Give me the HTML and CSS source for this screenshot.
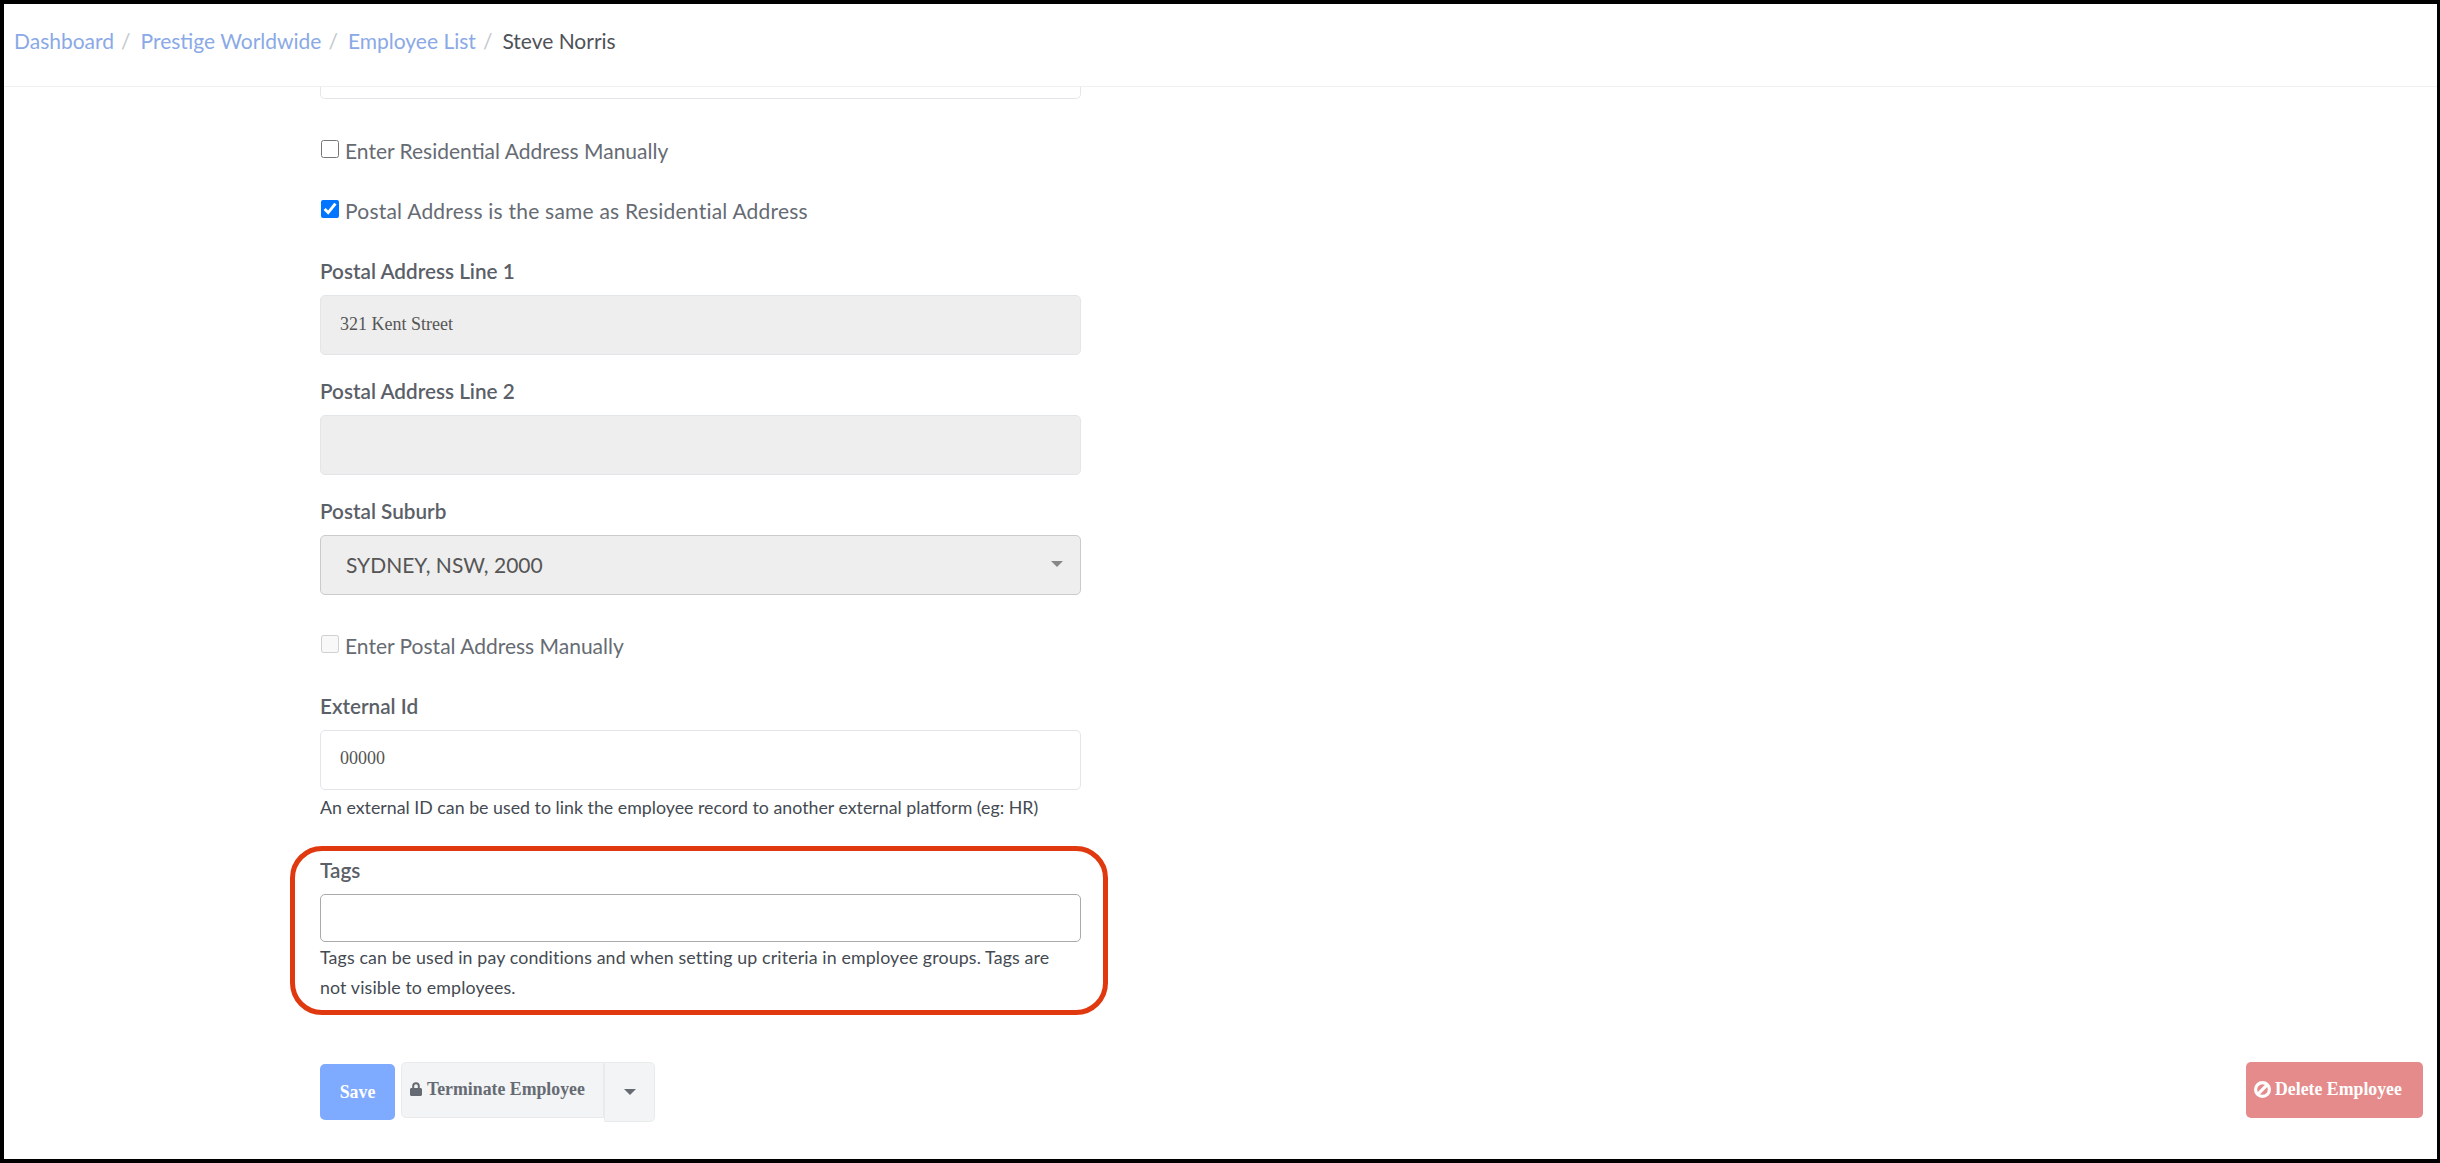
FILE: index.html
```html
<!DOCTYPE html>
<html lang="en">
<head>
<meta charset="utf-8">
<title>Steve Norris</title>
<link rel="stylesheet" href="styles.css">
</head>
<body>
<div class="frame">
  <nav class="crumbs">
    <a class="crumb-link">Dashboard</a><span class="crumb-sep">/</span>
    <a class="crumb-link">Prestige Worldwide</a><span class="crumb-sep">/</span>
    <a class="crumb-link">Employee List</a><span class="crumb-sep">/</span>
    <span class="crumb-current">Steve Norris</span>
  </nav>
  <main class="content">
    <form class="form">
      <div class="stub"></div>
      <label class="check check-first"><input type="checkbox" class="box"><span>Enter Residential Address Manually</span></label>
      <label class="check check-next"><input type="checkbox" class="box" checked><span>Postal Address is the same as Residential Address</span></label>

      <div class="field field-wide">
        <div class="label">Postal Address Line 1</div>
        <input class="control control-disabled" type="text" value="321 Kent Street" disabled>
      </div>
      <div class="field">
        <div class="label">Postal Address Line 2</div>
        <input class="control control-disabled" type="text" disabled>
      </div>
      <div class="field">
        <div class="label">Postal Suburb</div>
        <div class="select">
          <span>SYDNEY, NSW, 2000</span>
          <svg class="select-caret" width="12" height="6" viewBox="0 0 12 6"><path d="M0 0h12L6 6z"/></svg>
        </div>
      </div>
      <label class="check check-muted"><input type="checkbox" class="box" disabled><span>Enter Postal Address Manually</span></label>
      <div class="field field-wide">
        <div class="label">External Id</div>
        <input class="control" type="text" value="00000">
        <div class="help">An external ID can be used to link the employee record to another external platform (eg: HR)</div>
      </div>
      <div class="field field-tags">
        <div class="highlight"></div>
        <div class="label">Tags</div>
        <input class="control control-tags" type="text">
        <div class="help help-tags">Tags can be used in pay conditions and when setting up criteria in employee groups. Tags are not visible to employees.</div>
      </div>
    </form>
    <div class="actions">
      <div class="actions-left">
        <button class="btn btn-save" type="button">Save</button>
        <button class="btn btn-terminate" type="button">
          <svg class="icon" width="12" height="14" viewBox="0 0 12 14"><path d="M2.200 6V4a3.800 3.800 0 0 1 7.600 0v2h.7c.8 0 1.500.7 1.500 1.500v5c0 .8-.7 1.500-1.500 1.500h-9C.7 14 0 13.300 0 12.500v-5C0 6.700.7 6 1.500 6zm2 0h3.600V4a1.800 1.800 0 0 0-3.600 0z"/></svg>
          Terminate Employee
        </button>
        <button class="btn btn-caret" type="button" aria-label="More">
          <svg width="12" height="6" viewBox="0 0 12 6"><path d="M0 0h12L6 6z"/></svg>
        </button>
      </div>
      <button class="btn btn-delete" type="button">
        <svg class="icon" width="17" height="17" viewBox="0 0 16 16"><circle cx="8" cy="8" r="6.500" fill="none" stroke="currentColor" stroke-width="3"/><path d="M3.500 12.500l9-9" stroke="currentColor" stroke-width="3"/></svg>
        Delete Employee
      </button>
    </div>
  </main>
</div>
</body>
</html>
```
FILE: styles.css
```css
* { box-sizing: border-box; }
html, body { margin: 0; padding: 0; background: #000; }
.frame {
  height: 1163px;
  overflow: hidden;
  background: #fff;
  border-style: solid;
  border-color: #000;
  border-width: 4px 3px 4px 4px;
  font-family: Lato, "Liberation Sans", sans-serif;
  color: #666b73;
}
.crumbs {
  display: flex;
  align-items: center;
  height: 83px;
  padding: 0 0 10px 10px;
  border-bottom: 1px solid #eef0f2;
  font-size: 21px;
}
.crumb-link { color: #8aa9e6; }
.crumb-sep { color: #c4c8cc; margin: 0 10px 0 7px; }
.crumb-current { color: #4f5257; }
.content { padding: 0 14px 0 316px; }
.form { width: 761px; }
.stub {
  height: 12px;
  border: 1px solid #e3e6e8;
  border-top: 0;
  border-radius: 0 0 5px 5px;
}
.check {
  display: flex;
  align-items: flex-start;
  height: 30px;
  line-height: 28px;
  font-size: 21px;
  color: #666b73;
}
.check-first { margin-top: 38px; }
.check-next { margin-top: 30px; letter-spacing: .22px; }
.check-muted { margin-top: 37px; }
.box {
  width: 18px;
  height: 18px;
  margin: 3px 6px 0 1px;
  flex: none;
}
.field { margin-top: 25px; }
.field-wide { margin-top: 33px; }
.field-tags { margin-top: 37px; position: relative; }
.label {
  height: 24px;
  line-height: 23px;
  margin-bottom: 11px;
  font-size: 20.700px;
  font-weight: 600;
  color: #5b6068;
}
.control {
  display: block;
  width: 100%;
  height: 60px;
  padding: 0 19px 3px;
  border: 1px solid #e3e6e8;
  border-radius: 5px;
  background: #fff;
  font-family: "Liberation Serif", serif;
  font-size: 18px;
  color: #555;
  outline: 0;
}
.control-disabled { padding-bottom: 1px; background: #eee; opacity: 1; color: #555; -webkit-text-fill-color: #555; }
.control-tags { height: 48px; border-color: #aaa; }
.select {
  display: flex;
  align-items: center;
  justify-content: space-between;
  height: 60px;
  padding: 0 17px 2px 25px;
  border: 1px solid #c9cbcd;
  border-radius: 5px;
  background: #eee;
  font-size: 21px;
  color: #555;
}
.select-caret { fill: #888; }
.help {
  height: 30px;
  line-height: 30px;
  margin-top: 2px;
  font-size: 17.800px;
  color: #444a52;
}
.help-tags { height: 60px; margin-top: 0; padding-right: 22px; letter-spacing: .13px; }
.highlight {
  position: absolute;
  top: -13px;
  left: -30px;
  right: -27px;
  height: 169px;
  border: 5px solid #e0390f;
  border-radius: 32px;
}
.actions {
  display: flex;
  justify-content: space-between;
  align-items: flex-start;
  margin-top: 60px;
}
.actions-left { display: flex; align-items: flex-start; }
.btn {
  display: flex;
  align-items: center;
  justify-content: flex-start;
  gap: 5px;
  height: 56px;
  padding: 0;
  border: 1px solid transparent;
  border-radius: 5px;
  font-family: "Liberation Serif", serif;
  font-size: 17.800px;
  font-weight: 700;
  white-space: nowrap;
}
.btn-save { width: 75px; margin-top: 2px; justify-content: center; background: #7eaaff; color: #fff; }
.btn-terminate {
  width: 203px;
  margin-left: 6px;
  padding: 0 0 2px 8px;
  background: #f3f4f6;
  border-color: #e9eaec;
  border-radius: 5px 0 0 5px;
  color: #666b73;
}
.btn-caret {
  width: 51px;
  height: 60px;
  justify-content: center;
  background: #f3f4f6;
  border-color: #e9eaec;
  border-radius: 0 5px 5px 0;
  color: #666b73;
}
.btn-caret svg { fill: #666b73; }
.btn-delete {
  width: 177px;
  padding: 0 0 2px 7px;
  gap: 4px;
  background: #e58b8b;
  color: #fff;
}
.icon { fill: currentColor; flex: none; }
```
